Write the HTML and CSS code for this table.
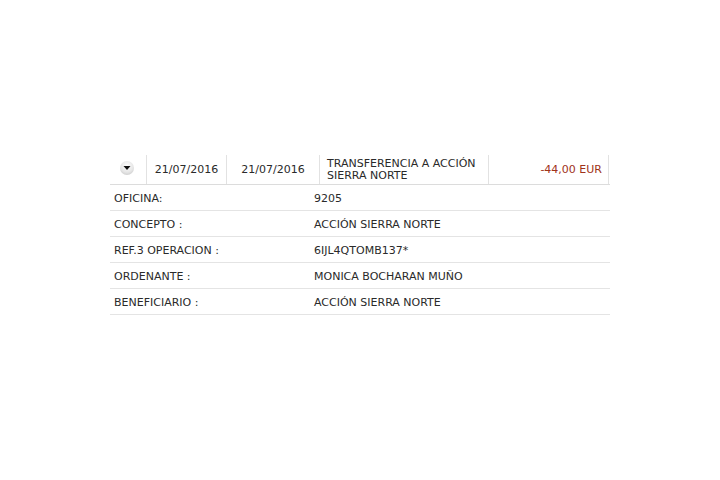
FILE: index.html
```html
<!DOCTYPE html>
<html lang="es">
<head>
<meta charset="utf-8">
<title>Movimiento</title>
<link rel="stylesheet" href="styles.css">
</head>
<body>
<div class="wrap">
  <div class="mov">
    <div class="cell c-icon"><span class="toggle"><svg width="8" height="6" viewBox="0 0 8 6"><path d="M0.5 1 H7.5 L4 5 Z" fill="#111"/></svg></span></div>
    <div class="cell c-date">21/07/2016</div>
    <div class="cell c-date2">21/07/2016</div>
    <div class="cell c-desc">TRANSFERENCIA A ACCIÓN<br>SIERRA NORTE</div>
    <div class="cell c-amt">-44,00 EUR</div>
  </div>
  <div class="detail">
    <div class="row"><span class="lbl">OFICINA:</span><span class="val">9205</span></div>
    <div class="row"><span class="lbl">CONCEPTO :</span><span class="val">ACCIÓN SIERRA NORTE</span></div>
    <div class="row"><span class="lbl">REF.3 OPERACION :</span><span class="val">6IJL4QTOMB137*</span></div>
    <div class="row"><span class="lbl">ORDENANTE :</span><span class="val">MONICA BOCHARAN MUÑO</span></div>
    <div class="row"><span class="lbl">BENEFICIARIO :</span><span class="val">ACCIÓN SIERRA NORTE</span></div>
  </div>
</div>
</body>
</html>
```

FILE: styles.css
```css
html, body { margin: 0; padding: 0; background: #fff; }
body {
  font-family: "DejaVu Sans", Verdana, sans-serif;
  font-size: 11px;
  color: #2a2a2a;
}
.wrap {
  width: 500px;
  margin: 155px 0 0 110px;
}
.mov {
  display: grid;
  grid-template-columns: 37px 80px 93px 169px 120px;
  height: 29px;
  border-bottom: 1px solid #dcdcdc;
}
.cell {
  display: flex;
  align-items: center;
  border-right: 1px solid #e2e2e2;
  line-height: 12px;
  padding-top: 1px;
}
.c-icon { justify-content: center; padding-top: 0; }
.toggle {
  width: 14px;
  height: 14px;
  border-radius: 50%;
  background: radial-gradient(circle at 50% 35%, #ffffff 0%, #e6e6e6 55%, #bdbdbd 100%);
  display: flex;
  align-items: center;
  justify-content: center;
  margin-left: -2px;
  margin-top: -3px;
}
.toggle svg { display: block; }
.c-date, .c-date2 { justify-content: center; }
.c-desc { padding-left: 7px; }
.c-amt { justify-content: flex-end; padding-right: 6px; color: #a0331a; }
.row {
  display: flex;
  height: 25px;
  align-items: center;
  border-bottom: 1px solid #e4e4e4;
  padding-left: 4px;
  padding-top: 1px;
  box-sizing: border-box;
  height: 26px;
}
.lbl { width: 200px; }
```
